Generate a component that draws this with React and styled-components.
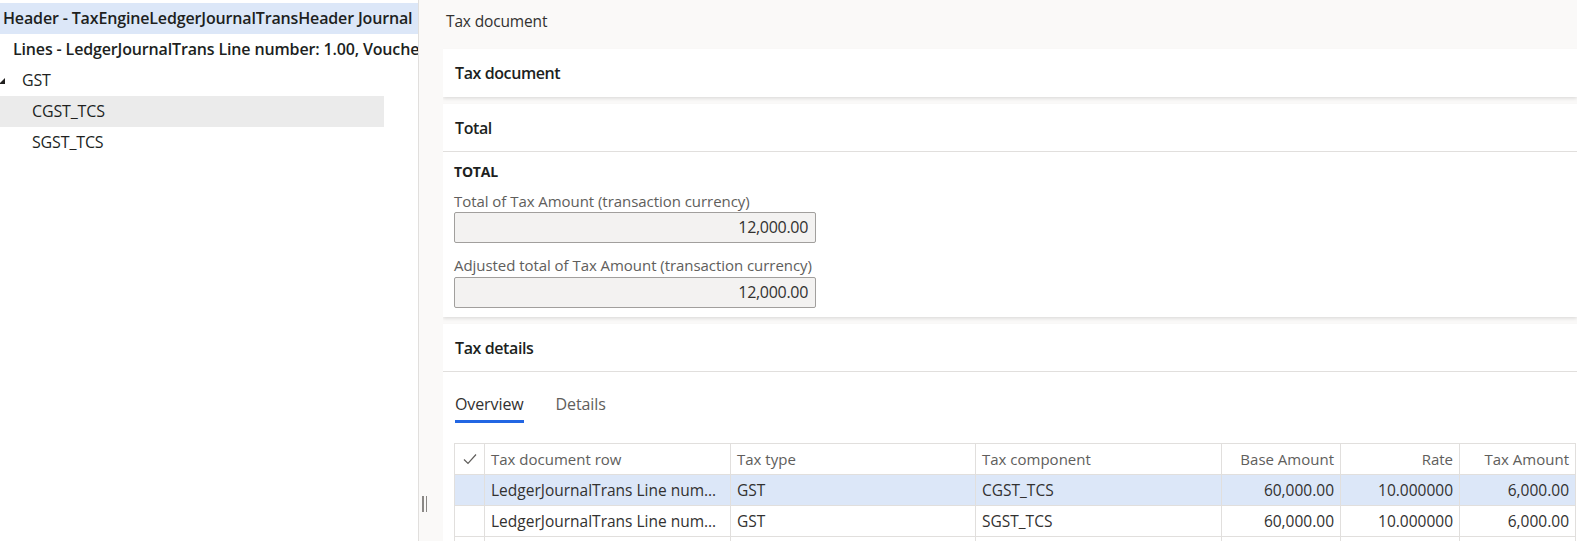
import React from "react";
import styled, { createGlobalStyle } from "styled-components";

const COLORS = {
  text: "#323130",
  dark: "#201f1e",
  muted: "#605e5c",
  page: "#faf9f8",
  line: "#e1dfdd",
  selBlue: "#dce7f8",
  selGray: "#ebebeb",
  accent: "#2266e3",
};

const GlobalStyle = createGlobalStyle`
  html, body {
    margin: 0;
    padding: 0;
    overflow: hidden;
    background: #ffffff;
  }
  body {
    font-family: "Segoe UI", "Open Sans", sans-serif;
    color: ${COLORS.text};
  }
  * {
    box-sizing: border-box;
  }
`;

const treeItems = [
  {
    label: "Header - TaxEngineLedgerJournalTransHeader Journal",
    indent: 3,
    strong: true,
    selected: "blue",
  },
  {
    label: "Lines - LedgerJournalTrans Line number: 1.00, Voucher",
    indent: 13,
    strong: true,
  },
  { label: "GST", indent: 22, expanded: true },
  { label: "CGST_TCS", indent: 32, selected: "gray" },
  { label: "SGST_TCS", indent: 32 },
];

const columns = [
  { key: "row", label: "Tax document row", width: 246 },
  { key: "type", label: "Tax type", width: 245 },
  { key: "component", label: "Tax component", width: 246 },
  { key: "base", label: "Base Amount", width: 119, align: "right" },
  { key: "rate", label: "Rate", width: 119, align: "right" },
  { key: "amount", label: "Tax Amount", width: 116, align: "right" },
];

const rows = [
  {
    row: "LedgerJournalTrans Line number: 1.00",
    type: "GST",
    component: "CGST_TCS",
    base: "60,000.00",
    rate: "10.000000",
    amount: "6,000.00",
    selected: true,
  },
  {
    row: "LedgerJournalTrans Line number: 1.00",
    type: "GST",
    component: "SGST_TCS",
    base: "60,000.00",
    rate: "10.000000",
    amount: "6,000.00",
  },
  { row: "", type: "", component: "", base: "", rate: "", amount: "" },
];

const gridTemplate = "30px " + columns.map((c) => c.width + "px").join(" ");

const App = () => {
  return (
    <>
      <GlobalStyle />
      <Page>
        <TreePanel>
          {treeItems.map((item) => (
            <TreeRow
              key={item.label}
              $indent={item.indent}
              $strong={item.strong}
              $selected={item.selected}
            >
              {item.expanded && (
                <Expander viewBox="0 0 6 6">
                  <polygon points="6,0 6,6 0,6" fill="#201f1e" />
                </Expander>
              )}
              {item.label}
            </TreeRow>
          ))}
        </TreePanel>

        <Splitter>
          <Handle>
            <HandleBar />
            <HandleBar />
          </Handle>
        </Splitter>

        <Main>
          <PageTitle>Tax document</PageTitle>
          <Cards>
            <Card>
              <CardHeader>Tax document</CardHeader>
            </Card>

            <Card>
              <CardHeader $open>Total</CardHeader>
              <CardBody>
                <GroupTitle>TOTAL</GroupTitle>
                <FieldLabel>Total of Tax Amount (transaction currency)</FieldLabel>
                <ReadOnlyInput>12,000.00</ReadOnlyInput>
                <FieldLabel $spaced>
                  Adjusted total of Tax Amount (transaction currency)
                </FieldLabel>
                <ReadOnlyInput $gap={2}>12,000.00</ReadOnlyInput>
              </CardBody>
            </Card>

            <Card>
              <CardHeader $open>Tax details</CardHeader>
              <TabsBody>
                <TabList>
                  <Tab $active>Overview</Tab>
                  <Tab>Details</Tab>
                </TabList>
                <Grid>
                  <GridRow>
                    <HeadCell $center>
                      <svg width="14" height="12" viewBox="0 0 14 12">
                        <path
                          d="M1 6.5 L5 10.5 L13 1.5"
                          fill="none"
                          stroke="#605e5c"
                          strokeWidth="1.2"
                        />
                      </svg>
                    </HeadCell>
                    {columns.map((c) => (
                      <HeadCell key={c.key} $align={c.align}>
                        {c.label}
                      </HeadCell>
                    ))}
                  </GridRow>
                  {rows.map((r, i) => (
                    <GridRow key={i} $selected={r.selected}>
                      <Cell />
                      {columns.map((c) => (
                        <Cell key={c.key} $align={c.align}>
                          {r[c.key]}
                        </Cell>
                      ))}
                    </GridRow>
                  ))}
                </Grid>
              </TabsBody>
            </Card>
          </Cards>
        </Main>
      </Page>
    </>
  );
};

const Page = styled.div`
  display: flex;
  height: 541px;
  overflow: hidden;
`;

const TreePanel = styled.div`
  width: 419px;
  flex: none;
  padding-top: 3px;
  border-right: 1px solid ${COLORS.line};
  background: #ffffff;
  overflow: hidden;
`;

const TreeRow = styled.div`
  position: relative;
  height: 31px;
  line-height: 31px;
  width: ${(p) => (p.$selected === "gray" ? "384px" : "100%")};
  padding-left: ${(p) => p.$indent}px;
  font-size: 16px;
  font-weight: ${(p) => (p.$strong ? 600 : 400)};
  letter-spacing: -0.15px;
  color: ${COLORS.dark};
  white-space: nowrap;
  background: ${(p) =>
    p.$selected === "blue"
      ? COLORS.selBlue
      : p.$selected === "gray"
      ? COLORS.selGray
      : "transparent"};
`;

const Expander = styled.svg`
  position: absolute;
  left: -1px;
  top: 13px;
  width: 6px;
  height: 6px;
`;

const Splitter = styled.div`
  width: 24px;
  flex: none;
  background: ${COLORS.page};
`;

const Handle = styled.div`
  display: flex;
  gap: 2px;
  margin: 496px 0 0 3px;
`;

const HandleBar = styled.div`
  width: 1.5px;
  height: 16px;
  background: #8a8886;
`;

const Main = styled.div`
  flex: 1;
  min-width: 0;
  background: ${COLORS.page};
  overflow: hidden;
`;

const PageTitle = styled.div`
  height: 49px;
  padding: 10px 0 0 3px;
  font-size: 15.5px;
  line-height: 22px;
  letter-spacing: -0.15px;
  color: ${COLORS.text};
`;

const Cards = styled.div`
  display: flex;
  flex-direction: column;
  gap: 7px;
`;

const Card = styled.section`
  background: #ffffff;
  box-shadow: 0 1.6px 3.6px 0 rgba(0, 0, 0, 0.13),
    0 0.3px 0.9px 0 rgba(0, 0, 0, 0.11);
`;

const CardHeader = styled.div`
  height: 48px;
  padding-left: 12px;
  display: flex;
  align-items: center;
  font-size: 16px;
  font-weight: 600;
  letter-spacing: -0.4px;
  color: ${COLORS.dark};
  border-bottom: ${(p) => (p.$open ? `1px solid ${COLORS.line}` : "none")};
`;

const CardBody = styled.div`
  padding: 10px 11px 9px;
`;

const GroupTitle = styled.div`
  font-size: 14px;
  line-height: 20px;
  font-weight: 700;
  letter-spacing: -0.2px;
  color: ${COLORS.dark};
`;

const FieldLabel = styled.div`
  margin-top: ${(p) => (p.$spaced ? "12px" : "9px")};
  font-size: 15px;
  line-height: 20px;
  letter-spacing: -0.05px;
  color: ${COLORS.muted};
`;

const ReadOnlyInput = styled.div`
  margin-top: ${(p) => p.$gap || 1}px;
  width: 362px;
  height: 31px;
  padding-right: 7px;
  border: 1px solid #a19f9d;
  border-radius: 2px;
  background: #f3f2f1;
  font-size: 16px;
  line-height: 29px;
  letter-spacing: -0.3px;
  text-align: right;
  color: ${COLORS.text};
`;

const TabsBody = styled.div`
  padding: 21px 0 0 11px;
`;

const TabList = styled.div`
  display: flex;
  gap: 32px;
  margin-left: 1px;
`;

const Tab = styled.div`
  font-size: 16px;
  line-height: 22px;
  padding-bottom: 5px;
  letter-spacing: -0.1px;
  color: ${(p) => (p.$active ? COLORS.text : COLORS.muted)};
  border-bottom: 3px solid
    ${(p) => (p.$active ? COLORS.accent : "transparent")};
`;

const Grid = styled.div`
  margin-top: 20px;
  display: flex;
  flex-direction: column;
  border-top: 1px solid ${COLORS.line};
  border-left: 1px solid ${COLORS.line};
  width: max-content;
`;

const GridRow = styled.div`
  display: grid;
  grid-template-columns: ${gridTemplate};
  background: ${(p) => (p.$selected ? COLORS.selBlue : "#ffffff")};
`;

const Cell = styled.div`
  height: 31px;
  padding: 0 6px;
  line-height: 30px;
  border-right: 1px solid ${COLORS.line};
  border-bottom: 1px solid ${COLORS.line};
  font-size: 15.5px;
  letter-spacing: 0;
  color: ${COLORS.text};
  text-align: ${(p) => p.$align || "left"};
  white-space: nowrap;
  overflow: hidden;
  text-overflow: ellipsis;
`;

const HeadCell = styled(Cell)`
  font-size: 15px;
  color: ${COLORS.muted};
  ${(p) =>
    p.$center &&
    `
    display: flex;
    align-items: center;
    justify-content: center;
  `}
`;

export default App;
